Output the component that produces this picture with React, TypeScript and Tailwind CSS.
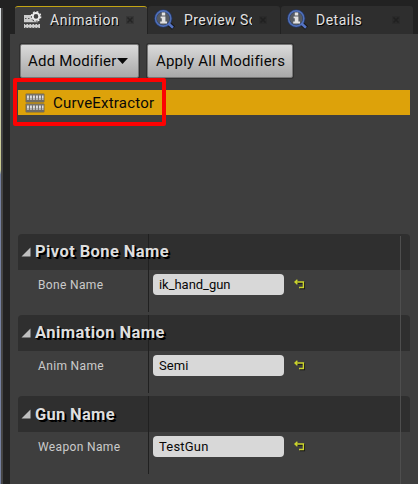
import React from "react";

function MagnifierIcon() {
  return (
    <svg width="22" height="22" viewBox="0 0 22 22" className="shrink-0">
      <path d="M14 14l5.5 5" stroke="#151515" strokeWidth="4.4" />
      <circle cx="9.2" cy="9.5" r="7.8" fill="#565b62" stroke="#253660" strokeWidth="2.8" />
      <circle cx="9.2" cy="9.5" r="7.6" fill="none" stroke="#5070b8" strokeWidth="1.6" />
      <path d="M14.5 14.5l4.5 4.2" stroke="#5574c4" strokeWidth="2.6" />
      <path d="M7.8 3.6h3.4v2.8H7.8zM6.6 7.4h4.8v5.2h1.6v2H6.2v-2h1.6V9.2H6.6z" fill="#e2e2e2" />
    </svg>
  );
}

function AnimationIcon() {
  return (
    <svg width="20" height="20" viewBox="0 0 20 20" className="shrink-0">
      <g fill="#cdcdcd">
        <path d="M1 5h7v4l3 2.4h4v.8H1z" />
        <path d="M1 14h16v4H1z" />
      </g>
      <path d="M2 8.5h7M2 14.5h14M2 17.8h14" stroke="#5a5a5a" strokeDasharray="1.5 1.5" />
      <circle cx="13" cy="6.4" r="3.3" fill="#444" stroke="#ededed" strokeWidth="2" />
      <circle cx="13" cy="6.4" r="4.7" fill="none" stroke="#ededed" strokeWidth="1.4" strokeDasharray="1.85 1.84" />
    </svg>
  );
}

function CurveIcon() {
  return (
    <svg width="20" height="20" viewBox="0 0 20 20" className="shrink-0">
      {[0.5, 10.5].map((y) => (
        <g key={y}>
          <rect x="0.5" y={y} width="19" height="9" rx="1" fill="#7d6a3f" />
          <rect x="1" y={y + 0.5} width="18" height="8" fill="#77736b" />
          <path d={`M2 ${y + 3.3}h16.5`} stroke="#dedede" strokeWidth="2.6" strokeDasharray="1.9 1.1" />
          <path d={`M2 ${y + 5.6}h16.5`} stroke="#b5b5b5" strokeWidth="2" strokeDasharray="1.9 1.1" />
          <path d={`M1 ${y + 7.5}h18`} stroke="#6a675f" strokeWidth="1" />
        </g>
      ))}
    </svg>
  );
}

function CloseIcon() {
  return (
    <svg width="8" height="8" viewBox="0 0 8 8" className="shrink-0">
      <rect width="8" height="8" fill="#222" opacity="0.3" />
      <path d="M1.5 1.5l5 5M6.5 1.5l-5 5" stroke="#1c1c1c" strokeWidth="1.4" opacity="0.7" />
    </svg>
  );
}

function ResetIcon() {
  return (
    <svg width="12" height="11" viewBox="0 0 12 11" className="mb-px ml-[10px]">
      <path d="M2 4h8.3v5.6H6" fill="none" stroke="#151515" strokeWidth="1.5" />
      <path d="M1 3h8.4v5.5H5M3.4 .8L1 3l2.4 2.2" fill="none" stroke="#cbd42c" strokeWidth="1.4" />
    </svg>
  );
}

function Tab({ title, icon, active, clip }: { title: string; icon: React.ReactNode; active?: boolean; clip?: boolean }) {
  return (
    <div
      className={`flex h-7 w-[132px] shrink-0 items-center rounded-t-[3px] pr-[13px] ${
        active ? "border-t border-[#c3a414] bg-[#3e3e3e] pb-px pl-[8px]" : "bg-[#2e2e2e] pl-[6px]"
      }`}
    >
      {icon}
      <span
        className={`whitespace-nowrap text-[14px] leading-5 text-[#e2e2e2] [text-shadow:1px_1px_0_#000] ${
          active ? "ml-[7px] tracking-[0.62px]" : clip ? "ml-[8px] w-[68px] overflow-hidden tracking-[0.45px]" : "ml-[7px] tracking-[0.5px]"
        }`}
      >
        {title}
      </span>
      <span className="ml-auto flex">
        <CloseIcon />
      </span>
    </div>
  );
}

const buttonClass =
  "flex h-[34px] items-center whitespace-nowrap rounded-[2px] border border-[#777] bg-linear-to-b from-[#dadada] to-[#a9a9a9] text-[15px] text-[#080808] shadow-[0_0_0_1px_#303030]";

interface SectionProps {
  title: string;
  label: string;
  value: string;
  titleClass: string;
  valueClass: string;
}

function Section({ title, label, value, titleClass, valueClass }: SectionProps) {
  return (
    <section className="relative h-[81px] w-[392px]">
      <div className="flex h-9 items-center rounded-t-[4px] bg-[#2f2f2f] pl-[3px]">
        <svg width="10" height="10" viewBox="0 0 10 10" className="shrink-0">
          <path d="M9.5 .5v9H.5z" fill="#c0c0c0" />
        </svg>
        <h2
          className={`relative z-10 ml-[4px] whitespace-nowrap text-[16.5px] font-bold leading-5 text-[#dedede] [text-shadow:1px_1px_0_#000,2px_2px_0_#000] ${titleClass}`}
        >
          {title}
        </h2>
      </div>
      <div className="flex h-[29px] items-center">
        <span className="w-[135px] pl-5 text-[12px] tracking-[0.35px] text-[#cbcbcb]">{label}</span>
        <div
          className={`flex h-[21px] w-[131px] items-center rounded-[4px] bg-[#d8d8d8] pl-[6px] text-[13px] text-[#080808] ${valueClass}`}
        >
          {value}
        </div>
        <ResetIcon />
      </div>
      <div className="absolute left-[130px] top-0 h-[78px] w-px bg-[#202020]" />
    </section>
  );
}

export default function App() {
  return (
    <div className="relative flex h-[484px] w-[418px] overflow-hidden bg-[#222] [font-family:Roboto,'Liberation_Sans',sans-serif]">
      <div className="mt-2 w-px bg-linear-to-b from-[#dfe3e8] from-0% via-[#c9c98c] via-[34%] to-[#7681a0] to-[35%]" />
      <div className="mt-2 w-[2px] bg-[#454545]" />
      <div className="w-[7px] bg-[#222]" />
      <main className="flex w-[408px] flex-col">
        <div className="flex h-[34px] items-end gap-px pl-[5px]">
          <Tab title="Animation" icon={<AnimationIcon />} active />
          <Tab title="Preview Scene" icon={<MagnifierIcon />} clip />
          <Tab title="Details" icon={<MagnifierIcon />} />
        </div>
        <div className="flex h-[450px] flex-col bg-[#3e3e3e] pl-2 pt-[10px]">
          <div className="flex gap-2 pl-[2px]">
            <button className={`${buttonClass} w-[119px] pl-[7px] tracking-[0.2px]`}>
              Add Modifier
              <svg width="11" height="6" viewBox="0 0 11 6" className="ml-px">
                <path d="M0 0h11L5.5 6z" fill="#080808" />
              </svg>
            </button>
            <button className={`${buttonClass} w-[146px] pl-[8px] tracking-[0.2px]`}>Apply All Modifiers</button>
          </div>
          <div className="relative mt-3 flex h-[25px] w-[392px] items-center bg-[#dda20a] pl-[7px] text-[15px] text-[#080808]">
            <CurveIcon />
            <span className="ml-2 pt-px tracking-[0.2px]">CurveExtractor</span>
            <div className="absolute -left-[5px] -top-[12px] h-12 w-[153px] rounded-[2px] border-4 border-[#fd0202]" />
          </div>
          <div className="relative mt-[119px] h-[250px]">
            <Section
              title="Pivot Bone Name"
              label="Bone Name"
              value="ik_hand_gun"
              titleClass="tracking-[0.4px]"
              valueClass="tracking-[-0.04px]"
            />
            <Section
              title="Animation Name"
              label="Anim Name"
              value="Semi"
              titleClass="tracking-[0.42px]"
              valueClass="tracking-[0.05px]"
            />
            <Section
              title="Gun Name"
              label="Weapon Name"
              value="TestGun"
              titleClass="pt-px tracking-[0.3px]"
              valueClass="tracking-[0.2px]"
            />
            <div className="absolute left-[382px] top-[2px] h-[248px] w-px bg-[#4e4e4e]" />
          </div>
        </div>
      </main>
    </div>
  );
}
